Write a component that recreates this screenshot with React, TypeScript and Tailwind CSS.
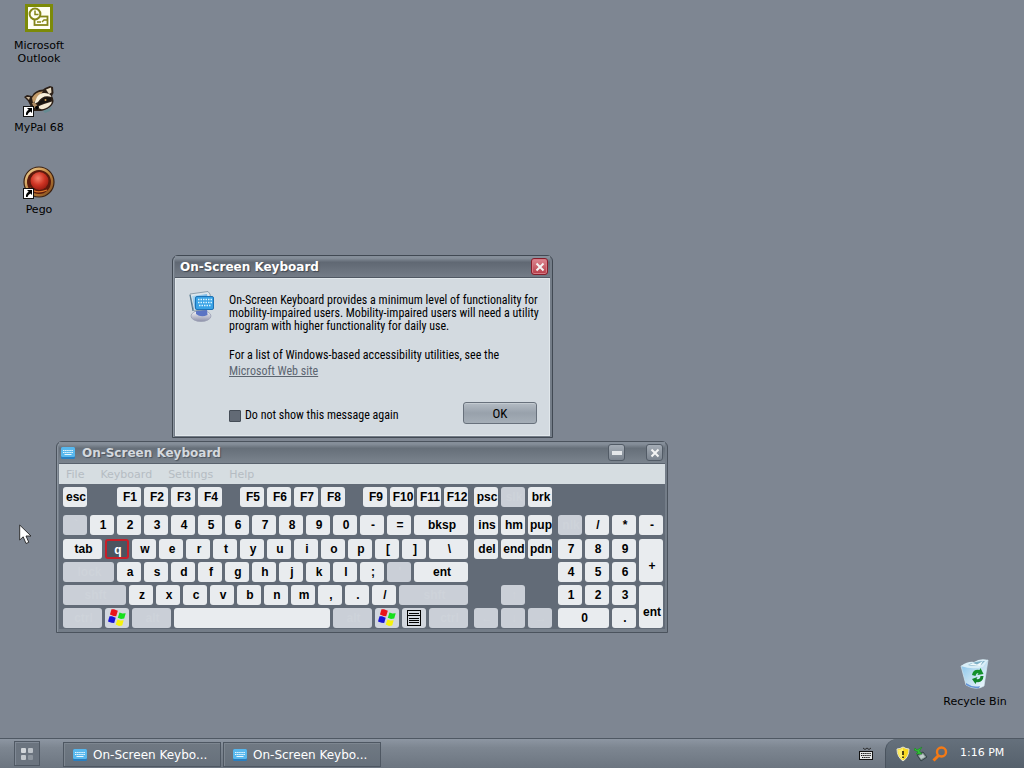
import type { ReactNode } from "react";

type KeyDef = {
  label: ReactNode;
  name?: string;
  width?: string;
  dim?: boolean;
  active?: boolean;
  tall?: boolean;
  blank?: boolean;
};

const k = (label: string): KeyDef => ({ label });
const off = (label: string, width?: string): KeyDef => ({ label, width, dim: true });
const gap = (width: string): KeyDef => ({ label: "", width, blank: true });

function WindowsFlag() {
  return (
    <svg viewBox="0 0 20 20" className="mx-auto size-5" aria-hidden="true">
      <path d="M4.500 1.200L7 1.200L10.800 2.800L9.200 8.200L6.500 8L2.900 6.600Z" fill="#e8131b" />
      <path d="M12.500 4.500L15.500 5.500L18.700 5.200L17.200 10.600L14 11L10.800 9.700Z" fill="#15e01c" />
      <path d="M2.500 8.200L5 8.300L8.700 9.800L7.200 15L4.500 14.800L1 13.500Z" fill="#1712d8" />
      <path d="M10.500 11.500L13.500 12.600L16.700 12.200L15.200 17.400L12 18L8.700 16.600Z" fill="#f6f30c" />
    </svg>
  );
}

function MenuGlyph() {
  return (
    <svg viewBox="0 0 16 18" className="mx-auto h-[18px] w-4" aria-hidden="true" shapeRendering="crispEdges">
      <path d="M1 1.500H15M3 4.500H13M1.500 1V17M14.500 1V17M1 16.500H15M3 9.500H13M3 11.500H13M3 13.500H13" stroke="#000" fill="none" />
      <path d="M1 6H15V7H1Z" fill="#000" />
    </svg>
  );
}

const mainRows: KeyDef[][] = [
  [k("esc"), gap("w-6"), k("F1"), k("F2"), k("F3"), k("F4"), gap("w-[12px]"), k("F5"), k("F6"), k("F7"), k("F8"), gap("w-[12px]"), k("F9"), k("F10"), k("F11"), k("F12")],
  [off("`"), ..."1234567890-=".split("").map(k), { label: "bksp", width: "w-[54px]" }],
  [{ label: "tab", width: "w-[39px]" }, { label: "q", active: true }, ..."wertyuiop[]".split("").map(k), { label: "\\", width: "w-[39px]" }],
  [off("lock", "w-[51px]"), ..."asdfghjkl;".split("").map(k), off("'"), { label: "ent", width: "w-[54px]" }],
  [off("shft", "w-[63px]"), ..."zxcvbnm,./".split("").map(k), off("shft", "w-[69px]")],
  [
    off("ctrl", "w-[39px]"),
    { label: <WindowsFlag />, name: "Left Windows" },
    off("alt", "w-[39px]"),
    { label: "", name: "Space", width: "w-[156px]" },
    off("alt", "w-[39px]"),
    { label: <WindowsFlag />, name: "Right Windows" },
    { label: <MenuGlyph />, name: "Menu" },
    off("ctrl", "w-[39px]"),
  ],
];

const navRows: KeyDef[][] = [
  [k("psc"), off("slk"), k("brk")],
  [k("ins"), k("hm"), k("pup")],
  [k("del"), k("end"), k("pdn")],
  [gap("w-6")],
  [gap("w-6"), off("↑"), gap("w-6")],
  [off("←"), off("↓"), off("→")],
];

const padRows: KeyDef[][] = [
  [off("nlk"), k("/"), k("*")],
  [k("7"), k("8"), k("9")],
  [k("4"), k("5"), k("6")],
  [k("1"), k("2"), k("3")],
  [{ label: "0", width: "w-[51px]" }, k(".")],
];

function Key({ def }: { def: KeyDef }) {
  const width = def.width ?? "w-6";
  const icon = typeof def.label !== "string";
  if (def.blank) return <span className={`${width} h-5 shrink-0`} />;
  const tone = def.active
    ? "border-2 border-[#c81e28] bg-[#4b545f] text-white leading-[18px]"
    : def.dim
      ? "bg-[#cacfd7] text-[#ced3da] leading-[21px]"
      : icon
        ? "bg-[#d2d7de] leading-5"
        : "bg-[#e9ecef] text-black leading-[21px]";
  return (
    <button
      type="button"
      aria-label={def.name}
      className={`${width} ${def.tall ? "h-[43px] pt-3" : "h-5"} ${icon ? "" : "pl-[2px]"} ${tone} block shrink-0 overflow-hidden rounded-[3px] text-center text-[12px] font-bold whitespace-nowrap`}
    >
      {def.label}
    </button>
  );
}

function Rows({ rows, first }: { rows: KeyDef[][]; first: number }) {
  const space = ["mb-2", "mb-1", "mb-[3px]", "mb-[3px]", "mb-[3px]", ""];
  return (
    <div>
      {rows.map((row, i) => (
        <div key={i} className={`flex h-5 gap-[3px] ${space[i + first]}`}>
          {row.map((d, j) => (
            <Key key={j} def={d} />
          ))}
        </div>
      ))}
    </div>
  );
}

function KeyboardIcon() {
  return (
    <svg viewBox="0 0 16 14" className="h-[14px] w-4 shrink-0" aria-hidden="true">
      <rect x="1" y="1" width="14" height="12" rx="1.500" fill="#2a7fc0" />
      <rect x="1" y="1" width="14" height="10" rx="1.500" fill="#58b8ee" />
      <path d="M3 4.500H13M3 6.500H13" stroke="#e9f8ff" strokeDasharray="1.500 .6" />
      <path d="M4.500 8.500H11.500" stroke="#e9f8ff" />
    </svg>
  );
}

function ComputerIcon() {
  return (
    <svg viewBox="0 0 32 34" className="h-[34px] w-8 shrink-0" aria-hidden="true">
      <defs>
        <linearGradient id="screen" x1="0" y1="0" x2="1" y2="1">
          <stop stopColor="#bfe4f6" />
          <stop offset="1" stopColor="#2b86d2" />
        </linearGradient>
        <linearGradient id="stand" x1="0" y1="0" x2="0" y2="1">
          <stop stopColor="#ffffff" />
          <stop offset="1" stopColor="#8c8fa9" />
        </linearGradient>
      </defs>
      <ellipse cx="13" cy="27" rx="10" ry="5.500" fill="url(#stand)" stroke="#9aa0b4" strokeWidth=".8" />
      <path d="M8 19L19 20L19.500 26Q13 29 8 25Z" fill="#5b74c4" />
      <path d="M2 5L20 2.500L22 5L24 20L6 22Z" fill="#dce6ec" stroke="#7d909e" strokeWidth=".8" />
      <path d="M4 7L19 5L21 18L7 20.500Z" fill="url(#screen)" />
      <path d="M2 6L5 22" stroke="#53788f" strokeWidth="1.200" />
      <rect x="7.500" y="7.500" width="18" height="13" rx="1.500" fill="#39a3e6" stroke="#1e72b4" />
      <path d="M10 10.500H24M10 13.500H24M11 16.500H23" stroke="#d9f4ff" strokeWidth="1.500" strokeDasharray="1.500 1" />
    </svg>
  );
}

function Shortcut() {
  return (
    <svg viewBox="0 0 11 11" className="absolute bottom-0 left-0 size-[11px]" aria-hidden="true">
      <rect x=".5" y=".5" width="10" height="10" fill="#fff" stroke="#111" />
      <path d="M4 2H9V7L7.500 5.500Q5 6.500 4.500 9H3Q2.500 5.500 5.700 3.800Z" fill="#000" />
    </svg>
  );
}

function OutlookIcon() {
  return (
    <svg viewBox="0 0 28 28" className="size-7" aria-hidden="true">
      <rect width="28" height="28" fill="#7c8a08" />
      <rect x="3" y="3" width="22" height="22" fill="#fffff2" />
      <rect x="9.500" y="12.500" width="13" height="8.500" fill="#fffff2" stroke="#858719" strokeWidth="1.800" />
      <path d="M17 18L19 16H22" stroke="#858719" strokeWidth="1.400" fill="none" />
      <circle cx="10" cy="10" r="5.400" fill="#fffff2" stroke="#858719" strokeWidth="2" />
      <path d="M10 6.500V10.500H13.500M12 18H16" stroke="#858719" strokeWidth="1.500" fill="none" />
    </svg>
  );
}

function RaccoonIcon() {
  return (
    <svg viewBox="0 0 32 31" className="h-[31px] w-8" aria-hidden="true">
      <path d="M1 12L4 10L9 11Q12 5 20 4.500L22 3L27 1L30 2L30.500 8L29 11Q32 16 29 20Q25 25 18 26L10 26L7 20L5 16Z" fill="#2b1f17" />
      <path d="M23 4.500L28 2.500L28.500 7.500L26 9Z" fill="#e6d8bf" />
      <path d="M3 12L7 12L6 15Z" fill="#cbb89c" />
      <path d="M9 13Q13 6 20 6.500Q17 9 15 14L10 18Z" fill="#c39a68" />
      <path d="M14 12Q18 6 26 9Q28 10 28.500 12Q20 9 15 17L11 19Z" fill="#f8efdb" />
      <path d="M15 18Q22 10 28.500 13.500Q28 17 21 18Q17 19 16 21Z" fill="#17130f" />
      <path d="M16 21Q22 18.500 29 16.500Q28 21 22 23.500Q18 25 15.500 23Z" fill="#f4e9d2" />
      <path d="M9 18Q13 17 14 21L11 23Z" fill="#b08c62" />
      <circle cx="22.500" cy="15" r="1" fill="#d5a052" />
      <path d="M12 22Q14 20 16 22.500L14 25Z" fill="#000" />
      <path d="M20 26L29 22L27 26L22 28Z" fill="#668b92" />
    </svg>
  );
}

function PegoIcon() {
  return (
    <svg viewBox="0 0 32 32" className="size-8" aria-hidden="true">
      <defs>
        <radialGradient id="ball" cx=".42" cy=".35" r=".75">
          <stop stopColor="#f5806a" />
          <stop offset=".5" stopColor="#cf3524" />
          <stop offset="1" stopColor="#8b150c" />
        </radialGradient>
        <linearGradient id="rim" x1="0" y1="0" x2="1" y2="1">
          <stop stopColor="#f6dca0" />
          <stop offset=".5" stopColor="#c0853e" />
          <stop offset="1" stopColor="#7a4417" />
        </linearGradient>
      </defs>
      <circle cx="16" cy="16" r="15" fill="url(#rim)" stroke="#3b2112" strokeWidth="1.200" />
      <circle cx="16" cy="16" r="12" fill="#5c1a0c" />
      <circle cx="16.500" cy="15" r="9" fill="url(#ball)" />
      <path d="M7 22Q13 28.500 24 24" stroke="#d9762c" fill="none" strokeWidth="1.300" />
    </svg>
  );
}

function RecycleBinIcon() {
  return (
    <svg viewBox="0 0 30 34" className="h-[34px] w-[30px]" aria-hidden="true">
      <defs>
        <linearGradient id="bin" x1="0" y1="0" x2="1" y2="1">
          <stop stopColor="#7fc0ea" />
          <stop offset=".45" stopColor="#b9dcf0" />
          <stop offset="1" stopColor="#f6fbfd" />
        </linearGradient>
      </defs>
      <path d="M1 9L14 8L28 3L24 29Q16 34 6 28Z" fill="url(#bin)" stroke="#d2e8f2" strokeWidth=".7" />
      <path d="M1 9Q8 4 14 5Q20 1 28 3L23 10Q12 13 1 9Z" fill="#d9eef7" />
      <path d="M8 8Q15 4 25 4L21 8Q14 10 8 8Z" fill="#7fb0c6" />
      <path d="M9 8L13 6L17 7.500L23 4L20 9Z" fill="#f1fafc" />
      <path d="M6 26Q13 31 20 29L19 31Q12 32 6 28Z" fill="#6795d6" />
      <path d="M12 18Q13 12 19.500 13L20.500 11L23.500 17L17.500 18L18.500 16Q16 16 15.500 19Z" fill="#13902a" />
      <path d="M23.500 19Q23 26 16.500 25L15.500 27L12 22L17.500 20L16.500 22Q20 23 20.500 19Z" fill="#12842a" />
    </svg>
  );
}

function DesktopIcon({ place, label, shortcut, children }: { place: string; label: string; shortcut?: boolean; children: ReactNode }) {
  return (
    <button type="button" className={`absolute ${place} flex w-[78px] flex-col items-center gap-1 text-[11px] leading-[13px] text-black`}>
      <span className="relative flex h-[34px] w-8 items-center justify-center">
        {children}
        {shortcut && <Shortcut />}
      </span>
      <span>{label}</span>
    </button>
  );
}

function Cross() {
  return (
    <svg viewBox="0 0 10 10" className="size-[10px]" aria-hidden="true">
      <path d="M1.500 1.500L8.500 8.500M8.500 1.500L1.500 8.500" stroke="#f4f4f4" strokeWidth="2" />
    </svg>
  );
}

function MessageWindow() {
  return (
    <section className="absolute top-[255px] left-[172px] w-[381px] rounded-t-md border border-[#414953] bg-[#747d88] px-[2px] pb-px shadow-[inset_1px_1px_0_#8d96a1]">
      <header className="flex h-[22px] items-center justify-between border-b border-[#505863] bg-linear-to-b from-[#858e99] from-10% via-[#606873] via-30% to-[#747c87] pr-[2px] pl-[5px]">
        <h2 className="pt-px text-[12px] leading-[14px] font-bold text-white [text-shadow:1px_1px_1px_#3f4650]">On-Screen Keyboard</h2>
        <button type="button" aria-label="Close message" className="flex size-[17px] items-center justify-center rounded-[3px] border border-[#861d2a] bg-linear-to-b from-[#dc8792] to-[#b63b49] shadow-[inset_0_0_0_1px_#d67983]">
          <Cross />
        </button>
      </header>
      <div className="flex gap-[9px] border border-[#e1e7eb] bg-[#d3dae0] pt-[10px] pr-3 pb-[11px] pl-3 font-['Roboto_Condensed','Liberation_Sans',sans-serif] text-[12px] leading-[13px] text-black">
        <ComputerIcon />
        <div className="min-w-0 flex-1 pt-[5px]">
          <p className="whitespace-nowrap">
            On-Screen Keyboard provides a minimum level of functionality for
            <br />
            mobility-impaired users. Mobility-impaired users will need a utility
            <br />
            program with higher functionality for daily use.
          </p>
          <p className="mt-4">For a list of Windows-based accessibility utilities, see the</p>
          <a href="#accessibility" className="mt-[3px] block w-max text-[#5c6570] underline">
            Microsoft Web site
          </a>
          <div className="mt-6 flex items-start justify-between">
            <label className="flex items-center gap-1 pt-[7px]">
              <input type="checkbox" className="size-3 appearance-none rounded-[1px] border border-[#454d57] bg-[#626a75] checked:bg-[#303740]" />
              Do not show this message again
            </label>
            <button type="button" className="h-[22px] w-[74px] rounded-[3px] border border-[#68717c] bg-linear-to-b from-[#b4bcc4] via-[#98a1ab] to-[#a5aeb7] text-[13px] shadow-[inset_0_1px_0_#c4cbd1]">
              OK
            </button>
          </div>
        </div>
      </div>
    </section>
  );
}

function KeyboardWindow() {
  return (
    <section className="absolute top-[441px] left-[56px] w-[612px] rounded-t-md border border-[#4b535d] bg-[#747d88] px-[2px] pb-[3px] shadow-[inset_1px_1px_0_#8b949f]">
      <header className="flex h-[22px] items-center border-b border-[#59626d] bg-linear-to-b from-[#858e99] from-10% via-[#666f79] via-30% to-[#7b848e] pr-[2px] pl-px">
        <KeyboardIcon />
        <h2 className="ml-[6px] flex-1 pt-px text-[12px] leading-[14px] font-bold text-[#d4d9de] [text-shadow:1px_1px_1px_#4a525c]">On-Screen Keyboard</h2>
        <div className="flex gap-[21px]">
          <button type="button" aria-label="Minimize" className="flex size-[17px] items-center justify-center rounded-[3px] border border-[#525b66] bg-linear-to-b from-[#a4acb5] to-[#7b848f]">
            <span className="h-1 w-[10px] bg-[#e4e7ea]" />
          </button>
          <button type="button" aria-label="Close keyboard" className="flex size-[17px] items-center justify-center rounded-[3px] border border-[#525b66] bg-linear-to-b from-[#a4acb5] to-[#7b848f]">
            <Cross />
          </button>
        </div>
      </header>
      <nav className="flex h-5 items-center gap-4 bg-[#d6dde1] px-[7px] text-[11px] leading-[13px] text-[#b5bcc3] [text-shadow:1px_1px_0_#f4f6f7]">
        <button type="button">File</button>
        <button type="button">Keyboard</button>
        <button type="button">Settings</button>
        <button type="button">Help</button>
      </nav>
      <div className="flex gap-[6px] bg-[#626b77] px-1 pt-[3px] pb-px font-['Liberation_Sans',Arial,sans-serif]">
        <Rows rows={mainRows} first={0} />
        <Rows rows={navRows} first={0} />
        <div className="flex gap-[3px] pt-7">
          <Rows rows={padRows} first={1} />
          <div className="flex flex-col">
            <Key def={{ label: "-" }} />
            <div className="mt-1 flex flex-col gap-[3px]">
              <Key def={{ label: "+", tall: true }} />
              <Key def={{ label: "ent", tall: true }} />
            </div>
          </div>
        </div>
      </div>
    </section>
  );
}

function TaskButton() {
  return (
    <button type="button" className="flex h-[25px] w-[158px] items-center gap-1 border border-[#4e5762] bg-linear-to-b from-[#707983] to-[#66707b] pt-px pl-2 text-[12px] leading-[14px] text-white shadow-[inset_1px_1px_0_#7d8690]">
      <KeyboardIcon />
      <span className="pl-px">On-Screen Keybo...</span>
    </button>
  );
}

function Taskbar() {
  return (
    <footer className="flex h-[30px] shrink-0 border-t border-[#4f5863] bg-linear-to-b from-[#8d96a2] via-[#7d8691] via-30% to-[#6c7580]">
      <div className="flex flex-1 items-start pt-[2px] pl-[14px]">
        <button type="button" aria-label="Start" className="mr-[23px] flex h-[25px] w-[26px] items-center justify-center border border-[#505964] bg-[#6b747f] shadow-[inset_1px_1px_0_#808995]">
          <span className="grid grid-cols-2 gap-[2px]">
            <span className="size-[5px] rounded-[1px] bg-[#d2d6da]" />
            <span className="size-[5px] rounded-[1px] bg-[#bcc2c8]" />
            <span className="size-[5px] rounded-[1px] bg-[#c3c8cd]" />
            <span className="size-[5px] rounded-[1px] bg-[#8d959e]" />
          </span>
        </button>
        <div className="flex gap-[2px] pt-px">
          <TaskButton />
          <TaskButton />
        </div>
      </div>
      <svg viewBox="0 0 14 14" className="mt-2 mr-3 size-[14px]" aria-label="Input keyboard">
        <path d="M4 1L6 2.500L8 1L10 2.500L12 1" stroke="#222" fill="none" strokeWidth=".9" />
        <rect x=".5" y="4.500" width="13" height="8" fill="#e6e8e9" stroke="#111" />
        <path d="M2 6.500H12M2 8.500H12M3 10.500H11" stroke="#111" strokeDasharray="1.400 .7" />
      </svg>
      <div className="flex h-[29px] w-[139px] items-center rounded-tl-xl border-l border-[#49535e] bg-linear-to-b from-[#65707c] to-[#56616c] pl-[10px] text-[11px] text-white">
        <svg viewBox="0 0 14 16" className="h-4 w-[14px]" aria-label="Security alert">
          <path d="M7 1Q10 3 13 3Q13 11 7 15Q1 11 1 3Q4 3 7 1Z" fill="#f9d91f" stroke="#e4e4d3" />
          <path d="M7 2V14Q2 10 2 4Q5 4 7 2Z" fill="#fff06b" />
          <path d="M7 5V9M7 10.500V12" stroke="#30270b" strokeWidth="1.700" />
        </svg>
        <svg viewBox="0 0 14 16" className="ml-1 h-4 w-[14px]" aria-label="Safely remove hardware">
          <path d="M3 9L9 6L13 11L7 15Z" fill="#7d8c8c" stroke="#344247" />
          <path d="M5 10L9 8L11 11L7 13Z" fill="#c0cccb" />
          <path d="M1 2L3 4L8 1L5.500 5L8 8H2L4 6L0 4Z" fill="#2fc035" stroke="#16851d" strokeWidth=".5" />
        </svg>
        <svg viewBox="0 0 16 16" className="ml-1 size-4" aria-label="Search">
          <circle cx="9.500" cy="6" r="4.500" fill="none" stroke="#f47a16" strokeWidth="2.400" />
          <path d="M6.500 9.500L1.500 14.500" stroke="#f47a16" strokeWidth="3" />
        </svg>
        <time className="ml-3">1:16 PM</time>
      </div>
    </footer>
  );
}

export default function App() {
  return (
    <div className="flex min-h-screen flex-col bg-[#7e8692] font-['DejaVu_Sans',Verdana,sans-serif]">
      <main className="relative flex-1 overflow-hidden">
        <DesktopIcon place="top-px left-0" label="Microsoft Outlook">
          <OutlookIcon />
        </DesktopIcon>
        <DesktopIcon place="top-[83px] left-0" label="MyPal 68" shortcut>
          <RaccoonIcon />
        </DesktopIcon>
        <DesktopIcon place="top-[165px] left-0" label="Pego" shortcut>
          <PegoIcon />
        </DesktopIcon>
        <DesktopIcon place="right-[10px] bottom-[30px]" label="Recycle Bin">
          <RecycleBinIcon />
        </DesktopIcon>
        <MessageWindow />
        <KeyboardWindow />
        <svg viewBox="0 0 13 21" className="pointer-events-none absolute top-[524px] left-[19px] h-[21px] w-[13px]" aria-hidden="true">
          <path d="M.7 1V16L4.200 12.800L7 19.500L9.800 18.300L7 12H12Z" fill="#fff" stroke="#222" strokeWidth=".9" />
        </svg>
      </main>
      <Taskbar />
    </div>
  );
}
